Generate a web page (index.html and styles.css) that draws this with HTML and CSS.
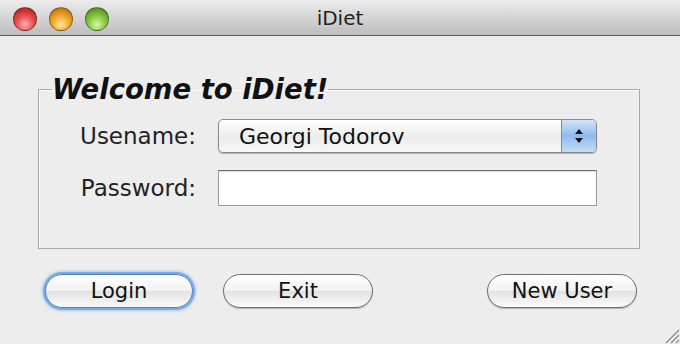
FILE: index.html
```html
<!DOCTYPE html>
<html lang="en">
<head>
    <meta charset="UTF-8">
    <title>iDiet</title>
    <link rel="stylesheet" href="styles.css">
</head>
<body>
    <div class="window">
        <div class="titlebar">
            <div class="lights">
                <span class="light red"></span>
                <span class="light yellow"></span>
                <span class="light green"></span>
            </div>
            <div class="title">iDiet</div>
        </div>
        <div class="content">
            <fieldset class="group">
                <legend>Welcome to iDiet!</legend>
                <div class="form">
                    <label>Usename:</label>
                    <div class="combo">
                        <span class="combo-text">Georgi Todorov</span>
                        <span class="combo-arrows">
                            <svg width="10" height="18" viewBox="0 0 10 18">
                                <path d="M5 2 L9 7 L1 7 Z" fill="#111"/>
                                <path d="M5 16 L9 11 L1 11 Z" fill="#111"/>
                            </svg>
                        </span>
                    </div>
                    <label>Password:</label>
                    <div class="textfield"></div>
                </div>
            </fieldset>
            <div class="buttons">
                <div class="btn focus">Login</div>
                <div class="btn">Exit</div>
                <div class="spacer"></div>
                <div class="btn">New User</div>
            </div>
        </div>
        <svg class="grip" width="20" height="20" viewBox="0 0 20 20">
            <path d="M19 6 L6 19 M19 11 L11 19 M19 16 L16 19" stroke="#888" stroke-width="1.2"/>
        </svg>
    </div>
</body>
</html>
```

FILE: styles.css
```css
*{
    margin: 0;
    padding: 0;
    box-sizing: border-box;
}
body{
    width: 680px;
    height: 344px;
    overflow: hidden;
    font-family: "DejaVu Sans", sans-serif;
    background: #ededed;
}
.window{
    width: 680px;
    height: 344px;
    position: relative;
    background: #ededed;
}
.titlebar{
    height: 36px;
    background: linear-gradient(#ececec, #bdbdbd);
    border-bottom: 1px solid #5a5a5a;
    position: relative;
    display: flex;
    align-items: center;
    justify-content: center;
}
.lights{
    position: absolute;
    left: 13px;
    top: 7px;
    display: flex;
    gap: 12px;
}
.light{
    width: 24px;
    height: 24px;
    border-radius: 50%;
    border: 1px solid rgba(0,0,0,.35);
}
.light.red{
    background: radial-gradient(circle at 50% 75%, #ffb0b0 0, #e84c4c 45%, #a51414 100%);
}
.light.yellow{
    background: radial-gradient(circle at 50% 75%, #ffe9a0 0, #f1a628 45%, #a85f07 100%);
}
.light.green{
    background: radial-gradient(circle at 50% 75%, #d9f7a8 0, #86c541 45%, #3d7a14 100%);
}
.title{
    font-size: 20px;
    color: #222;
    margin-top: 1px;
}
.content{
    padding: 0 40px 0 38px;
}
.group{
    margin-top: 39px;
    height: 174px;
    border: 1px solid #a9a9a9;
    box-shadow: inset 1px 1px 0 #fafafa;
    padding: 0 0 0 13px;
}
.group legend{
    font-size: 27.5px;
    font-weight: bold;
    font-style: italic;
    color: #111;
    padding: 0;
    line-height: 28px;
}
.form{
    display: grid;
    grid-template-columns: 144px 379px;
    column-gap: 22px;
    row-gap: 17px;
    align-items: center;
    margin-top: 16px;
}
.form label{
    font-size: 23px;
    color: #222;
    text-align: right;
}
.combo{
    height: 34px;
    border: 1px solid #8a8a8a;
    border-radius: 5px;
    background: linear-gradient(#ffffff, #ececec 55%, #f7f7f7);
    box-shadow: 0 1px 1px rgba(0,0,0,.25);
    display: flex;
    align-items: center;
    overflow: hidden;
}
.combo-text{
    flex: 1;
    font-size: 22px;
    color: #111;
    padding-left: 20px;
}
.combo-arrows{
    width: 35px;
    height: 100%;
    background: linear-gradient(#d2e4f8, #8fbbef 50%, #c4ddf8);
    border-left: 1px solid #6a8fc0;
    display: flex;
    align-items: center;
    justify-content: center;
}
.textfield{
    height: 36px;
    background: #fff;
    border: 1px solid #9a9a9a;
    border-top-color: #6e6e6e;
    box-shadow: inset 0 1px 1px rgba(0,0,0,.15);
}
.buttons{
    display: flex;
    align-items: center;
    margin-top: 25px;
    padding: 0 3px 0 7px;
    gap: 30px;
}
.spacer{
    flex: 1;
}
.btn{
    width: 150px;
    height: 34px;
    border: 1px solid #6f6f6f;
    border-radius: 17px;
    background: linear-gradient(#ffffff, #f1f1f1 50%, #e2e2e2 51%, #fafafa);
    box-shadow: 0 1px 1px rgba(0,0,0,.25);
    font-size: 21px;
    color: #111;
    display: flex;
    align-items: center;
    justify-content: center;
}
.btn.focus{
    width: 148px;
    border-color: #4a7fc0;
    box-shadow: 0 0 0 2px #7aa9e0, 0 0 3px 3px #a9c9ee;
}
.grip{
    position: absolute;
    right: 0;
    bottom: 0;
}
```
